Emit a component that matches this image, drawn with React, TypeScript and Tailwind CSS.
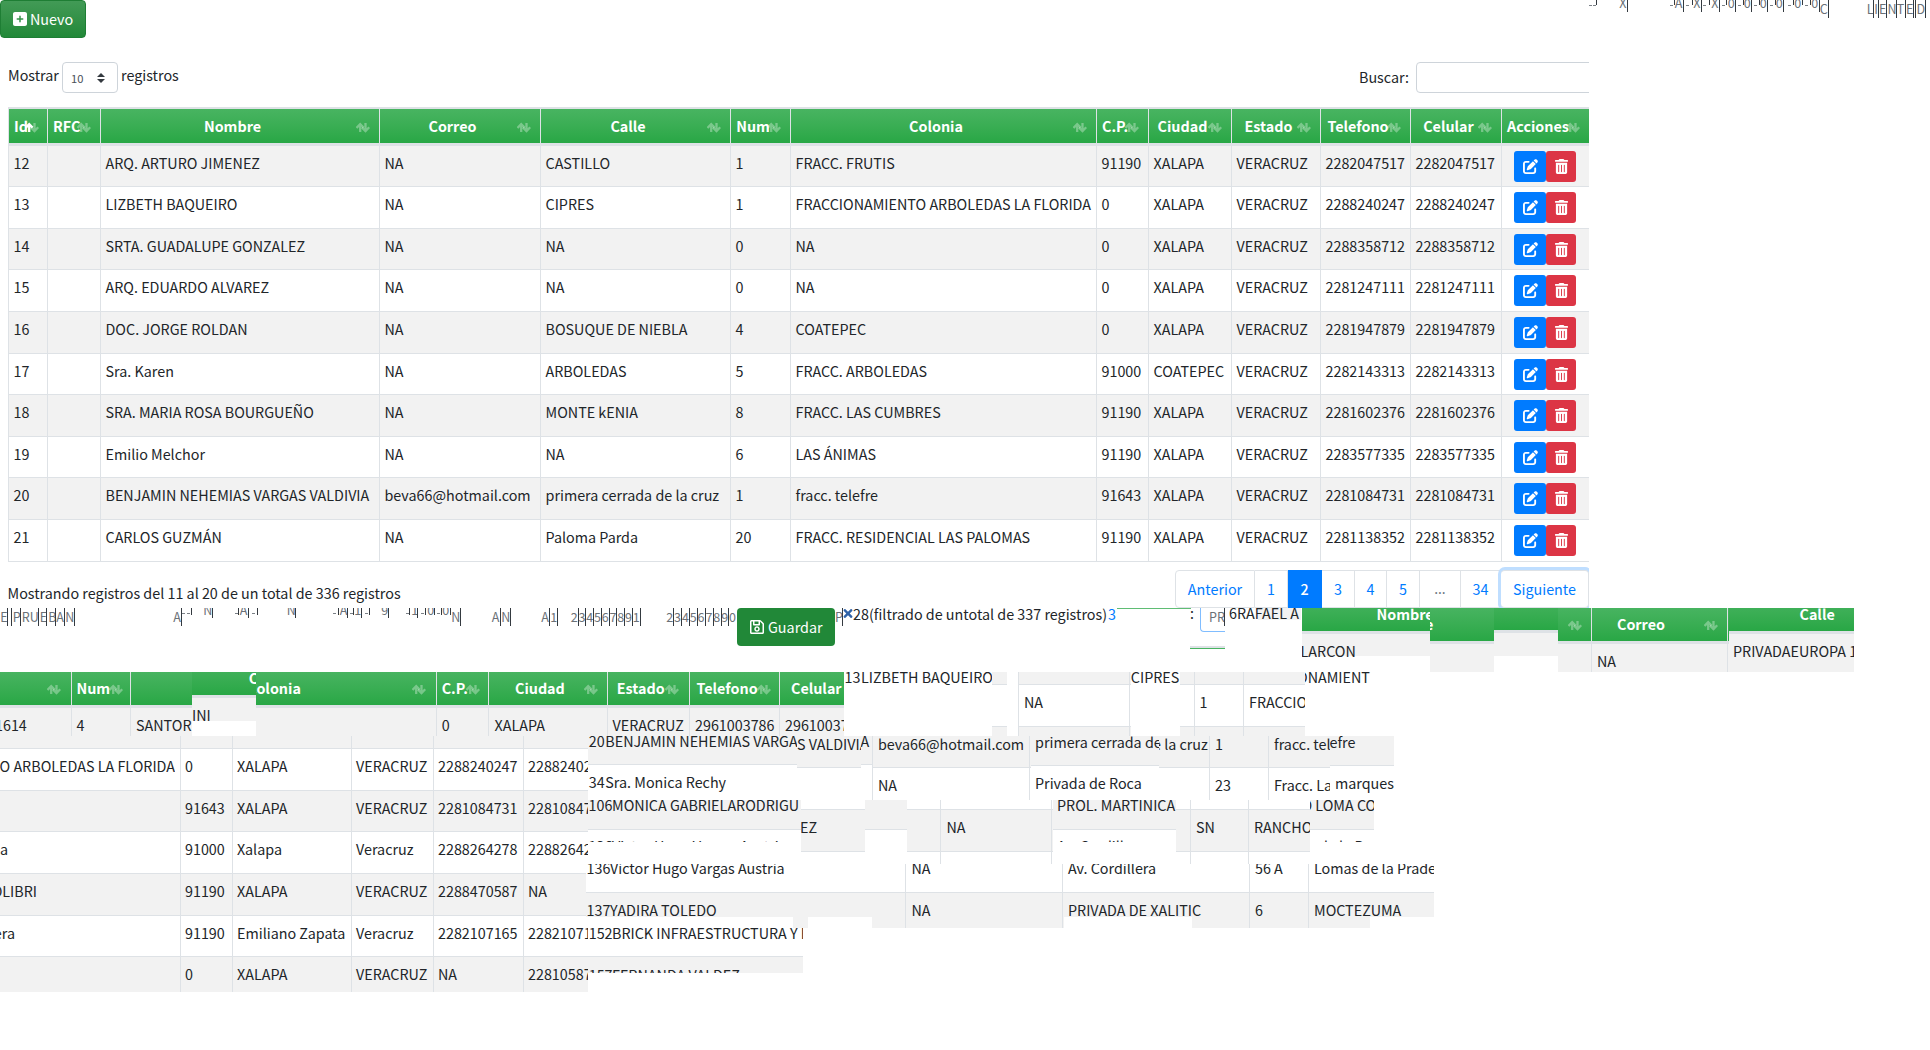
import React from "react";
import { FaPenToSquare, FaSquarePlus, FaTrashCan } from "react-icons/fa6";
import { FaRegSave, FaTimes } from "react-icons/fa";

const COLS = "grid-cols-[39px_53px_279px_161px_190px_60px_306px_52px_83px_89px_90px_91px_88px]";

const HEADS = ["Id", "RFC", "Nombre", "Correo", "Calle", "Num", "Colonia", "C.P.", "Ciudad", "Estado", "Telefono", "Celular", "Acciones"];

const ROWS: { h: number; c: string[] }[] = [
  { h: 41, c: ["12", "", "ARQ. ARTURO JIMENEZ", "NA", "CASTILLO", "1", "FRACC. FRUTIS", "91190", "XALAPA", "VERACRUZ", "2282047517", "2282047517"] },
  { h: 42, c: ["13", "", "LIZBETH BAQUEIRO", "NA", "CIPRES", "1", "FRACCIONAMIENTO ARBOLEDAS LA FLORIDA", "0", "XALAPA", "VERACRUZ", "2288240247", "2288240247"] },
  { h: 41, c: ["14", "", "SRTA. GUADALUPE GONZALEZ", "NA", "NA", "0", "NA", "0", "XALAPA", "VERACRUZ", "2288358712", "2288358712"] },
  { h: 42, c: ["15", "", "ARQ. EDUARDO ALVAREZ", "NA", "NA", "0", "NA", "0", "XALAPA", "VERACRUZ", "2281247111", "2281247111"] },
  { h: 42, c: ["16", "", "DOC. JORGE ROLDAN", "NA", "BOSUQUE DE NIEBLA", "4", "COATEPEC", "0", "XALAPA", "VERACRUZ", "2281947879", "2281947879"] },
  { h: 41, c: ["17", "", "Sra. Karen", "NA", "ARBOLEDAS", "5", "FRACC. ARBOLEDAS", "91000", "COATEPEC", "VERACRUZ", "2282143313", "2282143313"] },
  { h: 42, c: ["18", "", "SRA. MARIA ROSA BOURGUEÑO", "NA", "MONTE kENIA", "8", "FRACC. LAS CUMBRES", "91190", "XALAPA", "VERACRUZ", "2281602376", "2281602376"] },
  { h: 41, c: ["19", "", "Emilio Melchor", "NA", "NA", "6", "LAS ÁNIMAS", "91190", "XALAPA", "VERACRUZ", "2283577335", "2283577335"] },
  { h: 42, c: ["20", "", "BENJAMIN NEHEMIAS VARGAS VALDIVIA", "beva66@hotmail.com", "primera cerrada de la cruz", "1", "fracc. telefre", "91643", "XALAPA", "VERACRUZ", "2281084731", "2281084731"] },
  { h: 42, c: ["21", "", "CARLOS GUZMÁN", "NA", "Paloma Parda", "20", "FRACC. RESIDENCIAL LAS PALOMAS", "91190", "XALAPA", "VERACRUZ", "2281138352", "2281138352"] },
];

function SortIcon({ asc = false }: { asc?: boolean }) {
  return (
    <svg className="shrink-0" width="15" height="11" viewBox="0 0 15 11" fill="none" stroke="#fff" strokeWidth="2.3">
      <path d="M0.5 6 4.2 2.2 7.6 5.6M4.2 2.4V10" strokeOpacity={asc ? 1 : 0.33} />
      <path d="M6 5.6 9.5 9 13.2 5.2M9.5 8.8V1" strokeOpacity={0.33} />
    </svg>
  );
}

function HeadCell({ label, i }: { label: string; i: number }) {
  return (
    <div className="grid h-[34px] border-l border-[#dee2e6] font-bold text-white">
      <span className="col-start-1 row-start-1 justify-self-center pt-[5px] pr-[20px] pl-[5px]">{label}</span>
      <span className="col-start-1 row-start-1 mt-[13px] mr-[8px] justify-self-end">
        <SortIcon asc={i === 0} />
      </span>
    </div>
  );
}

function Actions() {
  return (
    <div className="flex border-l border-[#dee2e6] pt-[5px] pl-[12px] text-white">
      <button className="flex h-[31px] w-[32px] items-center justify-center rounded-[3px] bg-[#007bff] pb-px">
        <FaPenToSquare size={15} />
      </button>
      <button className="flex h-[31px] w-[30px] items-center justify-center rounded-[3px] bg-[#dc3545] pb-px">
        <FaTrashCan size={15} />
      </button>
    </div>
  );
}

/* Column: width, text indent, left border, distance of the sort icon from the right edge. */
type Col = [number, number, boolean?, number?];
/* Row: kind, height, baseline from the row's top, cell texts, gradient offset (head) or clipping flag (others). */
type Kind = "gray" | "white" | "line" | "head";
type Row = [Kind, number, number?, string[]?, number?];
type PieceData = { cols: Col[]; rows: Row[] };

const FILL: Record<Kind, string> = {
  gray: "bg-[#f2f2f2]",
  white: "bg-white",
  line: "bg-[#dee2e6]",
  head: "bg-linear-to-b from-[#48b461] to-[#28a745] bg-[length:100%_34px] bg-no-repeat font-bold text-white",
};

/* A cropped slice of a table. */
function Piece({ cols, rows, children }: PieceData & { children?: React.ReactNode }) {
  return (
    <div className="h-[64px] shrink-0 overflow-hidden">
      {rows.map(([kind, h, base = 18, texts = [], extra = 0], i) => (
        <div
          key={i}
          className={"flex " + FILL[kind] + (kind !== "head" && extra ? " overflow-hidden" : "")}
          style={{ height: h, backgroundPositionY: kind === "head" ? -extra : undefined }}
        >
          {cols.map(([w, indent, line, icon], j) => (
            <div key={j} className={"flex shrink-0 items-start" + (line ? " border-l border-[#dee2e6]" : "")} style={{ width: w }}>
              <span className="w-0 whitespace-pre" style={{ marginLeft: indent, marginTop: base - 18 }}>
                {texts[j] ?? ""}
              </span>
              {kind === "head" && icon !== undefined && (
                <span className="mt-[12px] ml-auto" style={{ marginRight: icon }}>
                  <SortIcon />
                </span>
              )}
            </div>
          ))}
        </div>
      ))}
      {children}
    </div>
  );
}

/* Glyph remnants scattered on a free strip: texts, caret bars and dots. */
type Glyph = [number, number, string];
function Glyphs({ w, h, texts, bars, dots }: { w: number; h: number; texts: Glyph[]; bars: [number, number][]; dots: number[] }) {
  return (
    <div className="relative shrink-0 overflow-hidden" style={{ width: w, height: h }}>
      {texts.map(([x, base, t], i) => (
        <span key={"t" + i} className="absolute text-[12.54px] leading-[18px] whitespace-pre text-[#6b7177]" style={{ left: x - 0.8, top: base - 14 }}>
          {t}
        </span>
      ))}
      {bars.map(([x, bh], i) => (
        <i key={"b" + i} className="absolute top-0 w-px bg-[#343a40]" style={{ left: x, height: bh }} />
      ))}
      {dots.map((x) => (
        <i key={"d" + x} className="absolute top-[5px] h-px w-[3px] bg-[#7b8187]" style={{ left: x }} />
      ))}
    </div>
  );
}

const TOP_TEXT: Glyph[] = [
  [31, 8, "X"], [86.5, 8, "A"], [105, 8, "X"], [123, 8, "X"], [139.5, 8, "0"], [155.5, 8, "0"], [171.5, 8, "0"], [187.5, 8, "0"], [206, 8, "0"], [223, 8, "0"],
  [231.5, 14, "C"], [278.5, 14, "L"], [286, 14, "I"], [290.8, 14, "E"], [299.3, 14, "N"], [308.5, 14, "T"], [317.8, 14, "E"], [328.3, 14, "D"],
];
const TOP_BARS: [number, number][] = [
  [7, 5], [38, 12], [85, 5], [94, 12], [103, 5], [112, 12], [120, 5], [130, 12], [137, 5], [146, 12], [154, 5], [162, 12], [170, 5], [178, 12],
  [186, 5], [194, 12], [204, 5], [213, 5], [221, 5], [230, 12], [239, 18], [284, 18], [289, 18], [297, 18], [307, 18], [316, 18], [324, 18], [326, 18], [336, 18],
];
const TOP_DOTS = [0, 4, 81, 97, 114, 133, 149, 165, 181, 199, 216];

const MID_TEXT: Glyph[] = [
  [1, 14, "E"], [13.5, 14, "P"], [22.5, 14, "R"], [30.5, 14, "U"], [40.5, 14, "E"], [49, 14, "B"], [57, 14, "A"], [66, 14, "N"], [174, 14, "A"],
  [204, 7, "N"], [240.5, 7, "A"], [287.5, 7, "N"], [340.5, 7, "A"], [355, 7, "1"], [382, 7, "9"], [412, 7, "1"], [428, 7, "0"], [443, 7, "0"],
  [452, 14, "N"], [492.5, 14, "A"], [502, 14, "N"], [542, 14, "A"], [551, 14, "1"],
  ...["2", "3", "4", "5", "6", "7", "8", "9", "1"].map((d, i): Glyph => [571.5 + i * 7.75, 14, d]),
  ...["2", "3", "4", "5", "6", "7", "8", "9", "0"].map((d, i): Glyph => [667 + i * 7.85, 14, d]),
];
const MID_BARS: [number, number][] = [
  [7, 18], [11, 18], [20, 18], [38, 18], [46, 18], [55, 18], [64, 18], [74, 18], [181, 18], [191, 7], [212, 10], [238, 7], [248, 10], [257, 7], [295, 10],
  [338, 7], [347, 10], [353, 7], [361, 10], [369, 7], [388, 10], [409, 7], [417, 10], [425, 7], [434, 7], [441, 7], [450, 7], [460, 18], [500, 18], [510, 18], [549, 18], [557, 18],
  ...Array.from({ length: 9 }, (_, i): [number, number] => [Math.round(577.6 + i * 7.75), 18]),
  ...Array.from({ length: 8 }, (_, i): [number, number] => [Math.round(673.4 + i * 7.85), 18]),
];
const MID_DOTS = [182, 187, 235, 252, 333, 350, 365, 406, 421, 437];

const LEFT_ROWS: { h: number; end: number; c: string[] }[] = [
  { h: 13, end: 0, c: ["", "", "", "", "", ""] },
  { h: 42, end: 175, c: ["O ARBOLEDAS LA FLORIDA", "0", "XALAPA", "VERACRUZ", "2288240247", "2288240247"] },
  { h: 41, end: 0, c: ["", "91643", "XALAPA", "VERACRUZ", "2281084731", "2281084731"] },
  { h: 42, end: 8, c: ["a", "91000", "Xalapa", "Veracruz", "2288264278", "2288264278"] },
  { h: 42, end: 37, c: ["OLIBRI", "91190", "XALAPA", "VERACRUZ", "2288470587", "NA"] },
  { h: 41, end: 15, c: ["era", "91190", "Emiliano Zapata", "Veracruz", "2282107165", "2282107165"] },
  { h: 35, end: 0, c: ["", "0", "XALAPA", "VERACRUZ", "NA", "2281058700"] },
];

function LeftTable() {
  return (
    <div className="w-[588px] shrink-0">
      {LEFT_ROWS.map((r, i) => (
        <div
          key={i}
          className={
            "grid grid-cols-[180px_52px_119px_82px_90px_65px] overflow-hidden whitespace-nowrap " +
            (i < 6 ? "border-b border-[#dee2e6] " : "") +
            (i % 2 ? "bg-white" : "bg-[#f2f2f2]")
          }
          style={{ height: r.h }}
        >
          {r.c.map((v, j) =>
            j === 0 ? (
              <div key={j} className="flex justify-end overflow-hidden pt-[5px]" style={{ width: r.end }}>
                {v}
              </div>
            ) : (
              <div key={j} className="overflow-hidden border-l border-[#dee2e6] pt-[5px] pl-[4px]">
                {v}
              </div>
            )
          )}
        </div>
      ))}
    </div>
  );
}

const PAGES = [
  { t: "Anterior", c: "w-[80px] rounded-l border-l" },
  { t: "1", c: "w-[33px]" },
  { t: "2", c: "w-[34px]" },
  { t: "3", c: "w-[33px]" },
  { t: "4", c: "w-[32px]" },
  { t: "5", c: "w-[33px]" },
  { t: "…", c: "w-[41px] font-['Noto_Sans']" },
  { t: "34", c: "w-[40px]" },
];

const HEAD_STRIP: PieceData[] = [
  { cols: [[1, -1.5], [127, 73.5]], rows: [["head", 23, 12, ["", "Nombre"], 11], ["line", 3], ["gray", 22, 23, ["LARCON"]], ["white", 16]] },
  { cols: [[64, -5]], rows: [["head", 33, 22, ["e"], 1], ["line", 3], ["gray", 28]] },
  { cols: [[64, 0]], rows: [["head", 22, 18, [], 12], ["line", 3], ["gray", 23], ["white", 16]] },
  {
    cols: [[33, 0, false, 8], [20, 5, true], [116, 6, false, 8], [2, 0, true]],
    rows: [["head", 33, 22, ["", "", "Correo"], 1], ["line", 3], ["gray", 28, 23, ["", "NA"]]],
  },
  { cols: [[60, 4], [65, 10.5]], rows: [["head", 23, 12, ["", "Calle"], 11], ["line", 3], ["gray", 38, 23, ["PRIVADAEUROPA 1"]]] },
];

const SECOND_STRIP: PieceData[] = [
  {
    cols: [[71, -5, false, 9], [59, 4.5, true, 6], [62, 5, true]],
    rows: [["head", 33, 22, ["", "Num"], 1], ["line", 3], ["gray", 28, 23, ["1614", "4", "SANTOR"]]],
  },
  { cols: [[56, 0], [8, 0.8]], rows: [["head", 23, 12, ["", "C"], 11], ["line", 3], ["gray", 23, 23, ["INI"]], ["white", 15]] },
  {
    cols: [[180, -9, false, 9], [52, 4.7, true, 7], [26, 5.5, true], [93, 1, false, 8], [4, 4.5, true], [78, 5.7, false, 9], [4, 5, true], [86, 3.5, false, 7], [6, 5, true], [59, 6]],
    rows: [
      ["head", 33, 22, ["Colonia", "C.P.", "", "Ciudad", "", "Estado", "", "Telefono", "", "Celular"], 1],
      ["line", 3],
      ["gray", 28, 23, ["", "0", "XALAPA", "", "VERACRUZ", "", "2961003786", "", "2961003786"]],
    ],
  },
  { cols: [[17, 0.5], [131, 0]], rows: [["white", 64, 11, ["13", "LIZBETH BAQUEIRO"]]] },
  { cols: [[15, 0]], rows: [["gray", 12], ["line", 1], ["white", 41], ["line", 1], ["gray", 9]] },
  { cols: [[11, 0]], rows: [["white", 64]] },
  { cols: [[111, 5, true], [2, 0, true]], rows: [["gray", 12], ["line", 1], ["white", 41, 23, ["NA"]], ["line", 1], ["gray", 9]] },
  { cols: [[49, -0.2]], rows: [["white", 64, 11, ["CIPRES"]]] },
  { cols: [[14, 0], [49, 4.5, true], [62, 5, true]], rows: [["gray", 12], ["line", 1], ["white", 41, 23, ["", "1", "FRACCIO"]], ["line", 1], ["gray", 9]] },
  { cols: [[80, -8]], rows: [["white", 64, 11, ["ONAMIENT"]]] },
];

const STRIP_A: PieceData[] = [
  { cols: [[17, 0.7], [192, 0.3]], rows: [["gray", 28, 11, ["20", "BENJAMIN NEHEMIAS VARGA"]], ["line", 1], ["white", 35, 23, ["34", "Sra. Monica Rechy"]]] },
  { cols: [[64, 0]], rows: [["gray", 31, 14, ["S VALDIVIA"]], ["line", 1], ["white", 32]] },
  { cols: [[11, -0.5]], rows: [["gray", 28, 11, ["A"]], ["line", 1], ["white", 35]] },
  { cols: [[157, 5, true], [2, 0, true]], rows: [["gray", 31, 14, ["beva66@hotmail.com"]], ["line", 1], ["white", 32, 23, ["NA"]]] },
  { cols: [[128, 4]], rows: [["gray", 29, 12, ["primera cerrada de"]], ["line", 1], ["white", 34, 23, ["Privada de Roca"]]] },
  {
    cols: [[50, -6], [59, 5, true], [62, 5, true]],
    rows: [["gray", 31, 14, ["e la cruz", "1", "fracc. telefre"]], ["line", 1], ["white", 32, 23, ["", "23", "Fracc. La"]]],
  },
  { cols: [[5, -0.5], [59, 0]], rows: [["gray", 29, 12, ["efre"]], ["line", 1], ["white", 34, 23, ["", "marques"]]] },
];

const STRIP_B: PieceData[] = [
  {
    cols: [[24, 0.5], [189, 0]],
    rows: [["gray", 29, 11, ["106", "MONICA GABRIELARODRIGU"]], ["line", 1], ["white", 12, 22, ["136", "Victor Hugo Vargas Austria"], 1], ["white", 22]],
  },
  { cols: [[64, -1]], rows: [["white", 9], ["line", 1], ["gray", 41, 23, ["EZ"]], ["line", 1], ["white", 12]] },
  { cols: [[42, 0]], rows: [["gray", 29], ["line", 1], ["white", 34]] },
  { cols: [[33, 0], [111, 5.5, true], [2, 0, true]], rows: [["white", 9], ["line", 1], ["gray", 41, 23, ["", "NA"]], ["line", 1], ["white", 12, 23, ["", "NA"]]] },
  { cols: [[123, 4]], rows: [["gray", 29, 11, ["PROL. MARTINICA"]], ["line", 1], ["white", 12, 22, ["Av. Cordillera"], 1], ["white", 22]] },
  {
    cols: [[14, 0], [58, 5, true], [62, 5, true]],
    rows: [["white", 9], ["line", 1], ["gray", 41, 23, ["", "SN", "RANCHO"]], ["line", 1], ["white", 12, 23, ["", "56 A", "Lomas"]]],
  },
  { cols: [[10, -8.5], [54, -1]], rows: [["gray", 29, 11, ["O LOMA CO"]], ["line", 1], ["white", 12, 22, ["", "de la Pradera"], 1], ["white", 22]] },
];

const STRIP_C: PieceData = {
  cols: [[24, 0.5], [295, 0], [157, 5.5, true], [187, 5, true], [59, 5, true], [126, 5, true]],
  rows: [
    ["white", 28, 10, ["136", "Victor Hugo Vargas Austria", "NA", "Av. Cordillera", "56 A", "Lomas de la Pradera"]],
    ["line", 1],
    ["gray", 24, 23, ["137", "YADIRA TOLEDO", "NA", "PRIVADA DE XALITIC", "6", "MOCTEZUMA"]],
  ],
};
const STRIP_C_EDGE: [number, Kind][] = [
  [207, "white"], [15, "gray"], [64, "white"], [33, "gray"], [1, "line"], [156, "gray"], [1, "line"], [1, "gray"],
  [128, "white"], [57, "gray"], [1, "line"], [58, "gray"], [1, "line"], [61, "gray"], [64, "white"],
];

function Strip({ pieces }: { pieces: PieceData[] }) {
  return (
    <div className="flex h-[64px]">
      {pieces.map((p, i) => (
        <Piece key={i} cols={p.cols} rows={p.rows} />
      ))}
    </div>
  );
}

export default function App() {
  return (
    <div className="h-[1050px] w-[1930px] overflow-hidden bg-white font-['Noto_Sans_CJK_SC','Noto_Sans',sans-serif] text-[14.33px] leading-[24px] text-[#212529]">
      <div className="flex h-[38px] justify-between">
        <button className="flex h-[38px] w-[86px] items-center rounded border border-[#1e7e34] bg-linear-to-b from-[#429a56] to-[#218838] pl-[11px] text-white">
          <FaSquarePlus size={16} className="mr-[2px]" />
          <span>Nuevo</span>
        </button>
        <Glyphs w={341} h={22} texts={TOP_TEXT} bars={TOP_BARS} dots={TOP_DOTS} />
      </div>

      <div className="flex h-[69px] w-[1589px] justify-between overflow-hidden pt-[24px] pl-[8px]">
        <div className="flex">
          <span className="mt-px w-[54px]">Mostrar</span>
          <div className="flex h-[31px] w-[56px] items-center justify-between rounded border border-[#ced4da] pr-[12px] pl-[8px] text-[11.2px] text-[#495057]">
            <span>10</span>
            <svg width="8" height="10" viewBox="0 0 8 10" fill="#343a40">
              <path d="M4 0 8 4H0zM0 6h8L4 10z" />
            </svg>
          </div>
          <span className="mt-px ml-[3px]">registros</span>
        </div>
        <div className="flex">
          <span className="mt-[3px] w-[57px]">Buscar:</span>
          <div className="-mr-[6px] h-[31px] w-[179px] rounded border border-[#ced4da]" />
        </div>
      </div>

      <div className="ml-[8px] w-[1581px] overflow-hidden whitespace-nowrap">
        <div className={"grid border-t-2 border-b-3 border-[#dee2e6] bg-linear-to-b from-[#48b461] to-[#28a745] bg-origin-padding " + COLS}>
          {HEADS.map((h, i) => (
            <HeadCell key={h} label={h} i={i} />
          ))}
        </div>
        {ROWS.map((r, i) => (
          <div key={i} className={"grid border-b border-[#dee2e6] " + COLS + (i % 2 ? " bg-white" : " bg-[#f2f2f2]")} style={{ height: r.h }}>
            {r.c.map((v, j) => (
              <div key={j} className="border-l border-[#dee2e6] pt-[5px] pl-[4.5px]">
                {v}
              </div>
            ))}
            <Actions />
          </div>
        ))}
      </div>

      <div className="flex h-[46px] w-[1589px] justify-between overflow-hidden pl-[8px]">
        <div className="-ml-[0.5px] pt-[19px]">Mostrando registros del 11 al 20 de un total de 336 registros</div>
        <div className="flex pt-[8px] text-[#007bff]">
          {PAGES.map((p) => (
            <div
              key={p.t}
              className={
                "flex h-[38px] justify-center border-y border-r pt-[6px] " +
                p.c +
                (p.t === "2" ? " border-[#007bff] bg-[#007bff] font-medium text-white" : " border-[#dee2e6]") +
                (p.t === "…" ? " text-[#6c757d]" : "")
              }
            >
              {p.t}
            </div>
          ))}
          <div className="flex h-[38px] w-[88px] justify-center rounded border border-l-0 border-[#dee2e6] bg-white pt-[6px] shadow-[0_0_0_3px_#bfdeff]">Siguiente</div>
        </div>
      </div>

      <div className="flex h-[64px] whitespace-nowrap">
        <div className="flex w-[1302px] shrink-0 overflow-hidden bg-white">
          <Glyphs w={737} h={30} texts={MID_TEXT} bars={MID_BARS} dots={MID_DOTS} />
          <button className="flex h-[38px] w-[98px] shrink-0 items-center rounded bg-[#218838] pl-[12px] text-white">
            <FaRegSave size={16} className="mr-[3px]" />
            <span>Guardar</span>
          </button>
          <span className="w-[7px] shrink-0 text-[12.54px] leading-[18px] text-[#6b7177]">P</span>
          <i className="h-[18px] w-px shrink-0 bg-[#343a40]" />
          <FaTimes size={13} color="#2f62a8" className="-mt-px w-[10px] shrink-0" />
          <span className="-mt-[6px] w-[255px] shrink-0">28(filtrado de untotal de 337 registros)</span>
          <span className="-mt-[6px] w-[9px] shrink-0 text-[#007bff]">3</span>
          <i className="h-px w-[74px] shrink-0 bg-[#5fbd74]" />
          <div className="-ml-px w-[35px] shrink-0">
            <div className="flex h-[38px]">
              <span className="-mt-[7px] w-[10px]">:</span>
              <div className="flex h-[24px] w-[25px] justify-between rounded-bl border-b border-l border-[#80bdff] pl-[8px]">
                <span className="w-0 text-[12.54px] leading-[18px] text-[#6b7177]">PR</span>
                <i className="h-[18px] w-px bg-[#343a40]" />
              </div>
            </div>
            <div className="h-[3px] border-t-2 border-b border-t-[#dee2e6] border-b-[#48b461]" />
          </div>
          <div className="ml-[4px] h-[12px] w-[72px] shrink-0 bg-linear-to-r from-white from-40% to-[#f2f2f2] to-40%">
            <div className="-mt-[7px]">6RAFAEL A</div>
          </div>
        </div>
        {HEAD_STRIP.map((p, i) => (
          <Piece key={i} cols={p.cols} rows={p.rows} />
        ))}
      </div>

      <Strip pieces={SECOND_STRIP} />

      <div className="flex">
        <LeftTable />
        <div>
          <Strip pieces={STRIP_A} />
          <Strip pieces={STRIP_B} />
          <div className="relative -ml-[2px] h-[64px]">
            <Piece cols={STRIP_C.cols} rows={STRIP_C.rows}>
              <div className="flex h-[11px]">
                {STRIP_C_EDGE.map(([w, k], i) => (
                  <i key={i} className={FILL[k]} style={{ width: w }} />
                ))}
              </div>
            </Piece>
          </div>
          <div className="w-[215px] overflow-hidden">
            <Piece
              cols={[[24, 0.7], [191, 0]]}
              rows={[["white", 28, 11, ["152", "BRICK INFRAESTRUCTURA Y E"]], ["line", 1], ["gray", 16, 24, ["157", "FERNANDA VALDEZ"], 1], ["white", 19]]}
            />
          </div>
        </div>
      </div>
    </div>
  );
}
